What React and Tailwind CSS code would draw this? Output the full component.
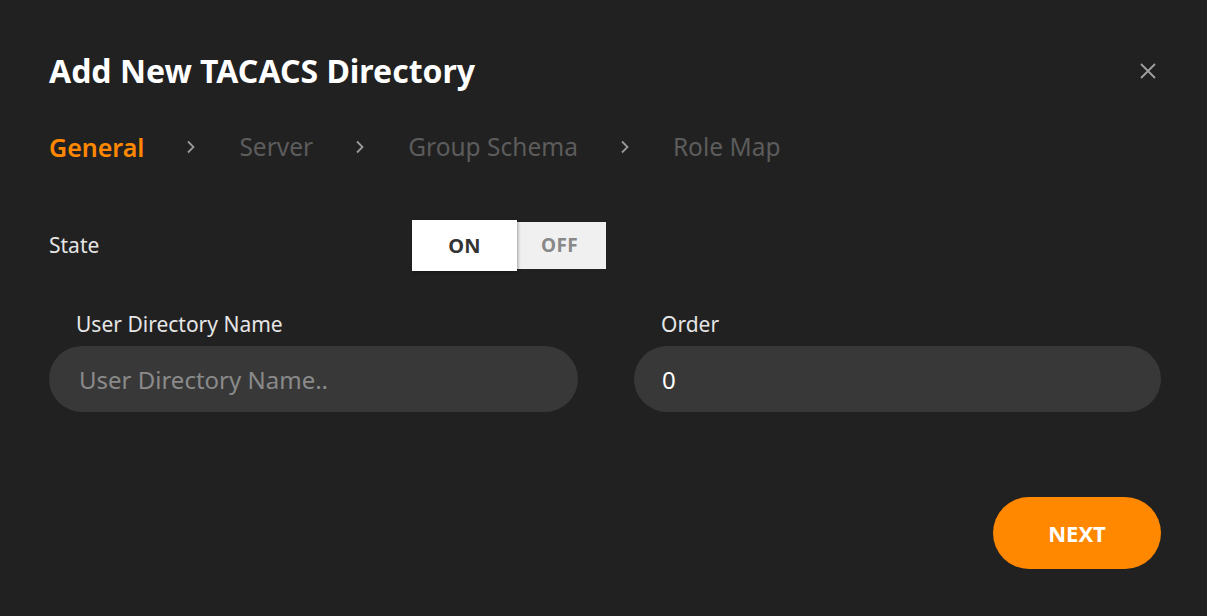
import { useState } from "react";

const steps = ["General", "Server", "Group Schema", "Role Map"];

const Chevron = () => (
  <svg width="10" height="16" viewBox="0 0 10 16" fill="none" className="ml-[42px] mr-[43px]">
    <path d="M2 2.5L7.5 8L2 13.5" stroke="#9a9a9a" strokeWidth="1.8" />
  </svg>
);

const App = () => {
  const [state, setState] = useState(true);

  return (
    <div
      className="w-[1207px] h-[616px] bg-[#212121] pl-[49px] pr-[46px] pt-[50px] overflow-hidden"
      style={{ fontFamily: '"Noto Sans", sans-serif' }}
    >
      {/* Header */}
      <div className="flex items-center justify-between h-[42px]">
        <h2 className="text-[32px] font-bold text-white leading-none">
          Add New TACACS Directory
        </h2>
        <button className="w-[18px] h-[18px] mr-[4px] flex items-center justify-center">
          <svg width="18" height="18" viewBox="0 0 18 18">
            <path d="M2 2L16 16M16 2L2 16" stroke="#a0a0a0" strokeWidth="1.8" />
          </svg>
        </button>
      </div>

      {/* Steps */}
      <div className="flex items-center mt-[35px] h-[40px]">
        {steps.map((s, i) => (
          <div key={s} className="flex items-center">
            <span
              className={`leading-none ${
                i === 0 ? "text-[25px] text-[#ff8800] font-semibold" : "text-[24.5px] text-[#5c5c5c]"
              }`}
            >
              {s}
            </span>
            {i < steps.length - 1 && <Chevron />}
          </div>
        ))}
      </div>

      {/* State */}
      <div className="flex items-center mt-[53px] h-[51px]">
        <span className="w-[363px] text-[21px] text-[#e6e6e6]">State</span>
        <div className="flex items-center">
          <button
            onClick={() => setState(true)}
            className={`w-[105px] h-[51px] text-[20px] font-bold tracking-[0.3px] ${
              state ? "bg-white text-[#333] shadow-[1px_1px_3px_rgba(0,0,0,0.35)] z-10" : "bg-[#f0f0f0] text-[#888]"
            }`}
          >
            ON
          </button>
          <button
            onClick={() => setState(false)}
            className={`w-[89px] h-[47px] pr-[4px] text-[19px] font-bold tracking-[0.3px] ${
              !state ? "bg-white text-[#333]" : "bg-[#f0f0f0] text-[#888]"
            }`}
          >
            OFF
          </button>
        </div>
      </div>

      {/* Fields */}
      <div className="grid grid-cols-[529px_527px] gap-x-[56px] mt-[38px]">
        <div>
          <label className="block pl-[27px] text-[21px] text-[#e6e6e6] leading-[30px]">
            User Directory Name
          </label>
          <input
            placeholder="User Directory Name.."
            className="mt-[7px] w-full h-[66px] rounded-full bg-[#383838] px-[30px] text-[24px] text-white placeholder-[#8a8a8a] outline-none"
          />
        </div>
        <div>
          <label className="block pl-[27px] text-[21px] text-[#e6e6e6] leading-[30px]">
            Order
          </label>
          <input
            defaultValue="0"
            className="mt-[7px] w-full h-[66px] rounded-full bg-[#383838] px-[28px] text-[24px] text-white outline-none"
          />
        </div>
      </div>

      {/* Footer */}
      <div className="flex justify-end mt-[85px]">
        <button className="w-[168px] h-[72px] rounded-full bg-[#ff8800] text-white text-[22px] font-bold">
          NEXT
        </button>
      </div>
    </div>
  );
};

export default App;
